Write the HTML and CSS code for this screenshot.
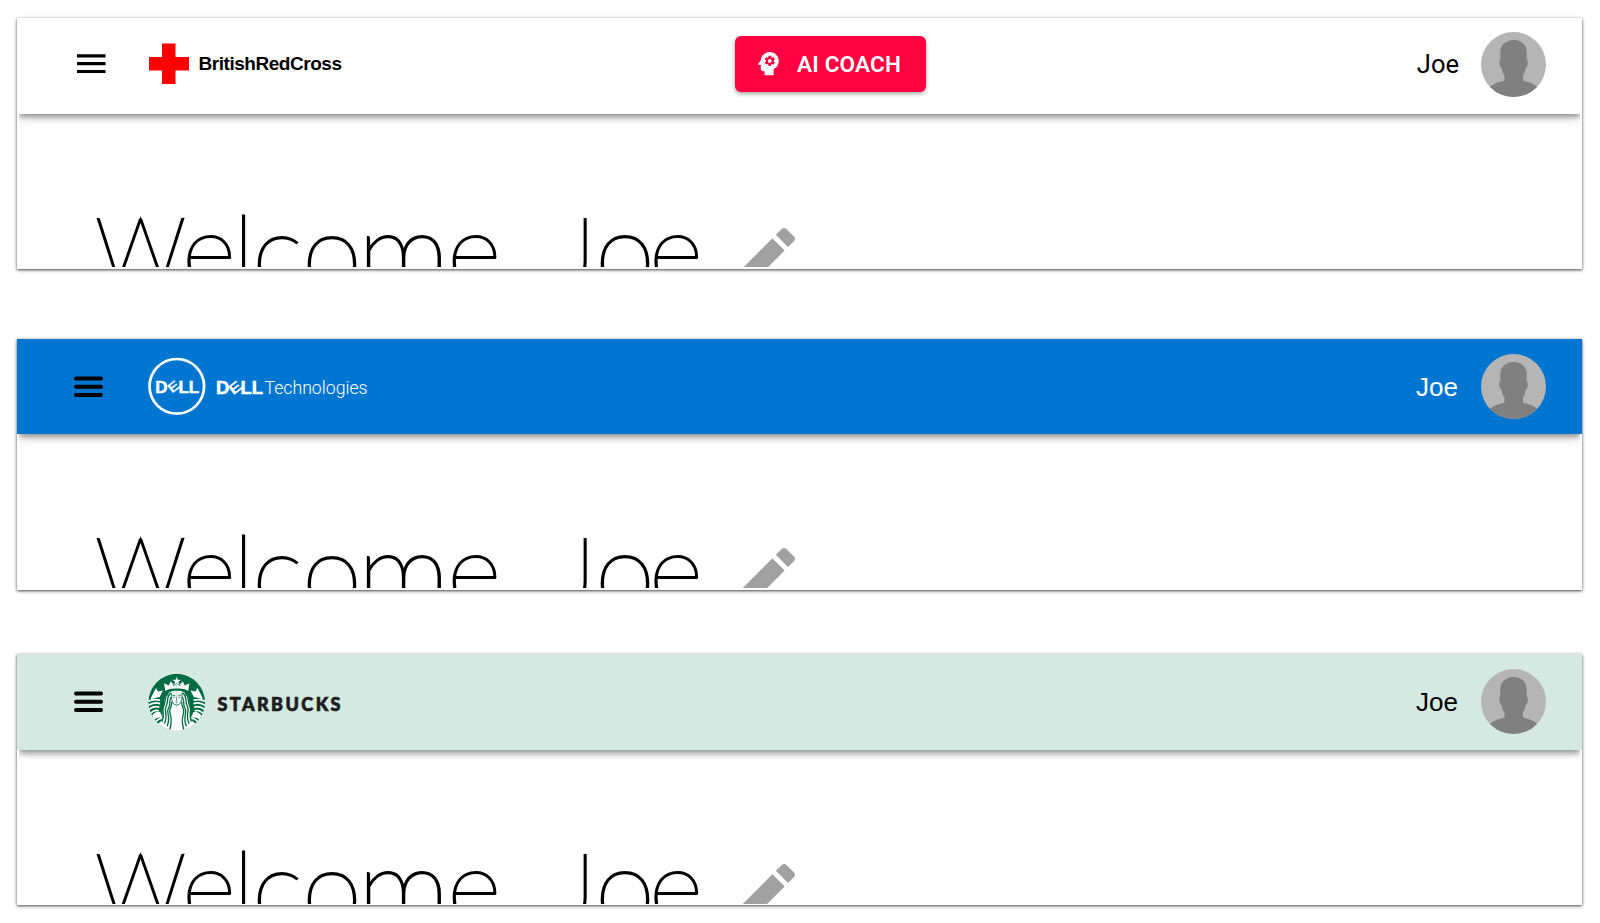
FILE: index.html
```html
<!DOCTYPE html>
<html lang="en">
<head>
<meta charset="utf-8">
<title>Welcome</title>
<link rel="stylesheet" href="styles.css">
</head>
<body>
<svg class="defs" width="0" height="0">
  <symbol id="avatar" viewBox="0 0 65 65">
    <clipPath id="round"><circle cx="32.5" cy="32.5" r="32.5"/></clipPath>
    <g clip-path="url(#round)">
      <rect width="65" height="65" fill="#b5b5b5"/>
      <path fill="#808080" d="M32.500 8C39 8 45.500 12 45.700 19.500L45.700 27.500C47.700 28 47 34 44.500 36.500C44 40 43 42 42 43.500V48.500C48 50.500 54 51.500 58 57V66H7V57C11 51.500 17 50.500 23.500 48.500V43.500C22 42 21.300 40 20.800 36.500C18 34 17.500 28 19.300 27.500L19.300 19.500C19.500 12 26 8 32.500 8Z"/>
    </g>
  </symbol>
  <symbol id="pencil" viewBox="0 0 24 24">
    <path d="M3 17.250V21h3.750L17.810 9.940l-3.750-3.750L3 17.250zM20.710 7.040c.39-.39.39-1.020 0-1.410l-2.340-2.340c-.39-.39-1.020-.39-1.410 0l-1.830 1.830 3.750 3.750 1.830-1.830z"/>
  </symbol>
</svg>
<main class="page">
  <section class="panel">
    <header class="bar bar-plain">
      <svg class="menu menu-square" viewBox="0 0 32 24"><path d="M3 3.900h28.500M3 11.700h28.500M3 19.500h28.500"/></svg>
      <svg class="logo" viewBox="0 0 230 64">
        <path fill="#f00" d="M14 11.500h13.500v13.500H41v13.500H27.500V52H14V38.500H1V25h13z"/>
        <text class="brc" x="50.500" y="38" textLength="143.500">BritishRedCross</text>
      </svg>
      <button class="coach">
        <svg viewBox="0 0 24 24"><path fill="#fff" fill-rule="evenodd" d="M13 3C9.250 3 6.200 5.940 6.020 9.640L4.100 12.200c-.25.33-.01.8.4.8H6v3c0 1.100.9 2 2 2h1v3h7v-4.680c2.360-1.120 4-3.530 4-6.320 0-3.870-3.130-7-7-7z"/><path fill="#ff0040" d="M16 10c0 .13-.01.26-.02.39l.83.66c.08.06.1.16.05.25l-.8 1.390c-.05.09-.16.12-.24.09l-.99-.4c-.21.16-.43.29-.67.39L14 13.830c-.01.1-.1.17-.2.17h-1.600c-.1 0-.18-.07-.2-.17l-.15-1.060c-.25-.1-.47-.23-.68-.39l-.99.4c-.09.03-.2 0-.25-.09l-.8-1.390c-.05-.08-.03-.19.05-.25l.84-.66c-.01-.13-.02-.26-.02-.39s.02-.27.04-.39l-.85-.66c-.08-.06-.1-.16-.05-.26l.8-1.380c.05-.09.15-.12.24-.09l1 .4c.2-.15.43-.29.67-.39L12 6.170c.02-.1.1-.17.2-.17h1.600c.1 0 .18.07.2.17l.15 1.060c.24.1.46.23.67.39l1-.4c.09-.03.2 0 .24.09l.8 1.380c.05.09.03.2-.05.26l-.85.66c.03.12.04.25.04.39z"/><circle cx="13" cy="10" r="1.430" fill="#fff"/></svg>
        <span>AI COACH</span>
      </button>
      <div class="user user-roboto"><span>Joe</span><svg class="avatar"><use href="#avatar"/></svg></div>
    </header>
    <div class="content">
      <svg class="welcome" viewBox="0 0 800 154">
        <text><tspan class="cap" x="78" y="168">W</tspan><tspan class="e" x="165" y="174">e</tspan><tspan x="217" y="167.500">l</tspan><tspan class="o" x="235 285" y="176.500">co</tspan><tspan class="m" x="340" y="181">m</tspan><tspan class="e" x="430.300" y="174">e</tspan></text>
        <text><tspan class="cap" x="541.500" y="168">J</tspan><tspan class="o" x="578" y="176">o</tspan><tspan class="e" x="632" y="173.500">e</tspan></text>
        <use href="#pencil" x="709.700" y="104.200" width="78" height="78"/>
      </svg>
    </div>
  </section>

  <section class="panel">
    <header class="bar bar-dell">
      <svg class="menu" viewBox="0 0 32 24"><path d="M2 3.500h25M2 11.800h25M2 20.100h25"/></svg>
      <svg class="logo" viewBox="0 0 230 64">
        <circle cx="28.800" cy="31.300" r="27.300" fill="none" stroke="#fff" stroke-width="2.700"/>
        <g class="dell dell-small"><text x="7.200" y="37.500">D</text><text class="tilt" transform="translate(25.300 31.500) rotate(-38) scale(1.250 1)" x="0" y="4.900">E</text><text x="30.500" y="37.500">L</text><text x="40.800" y="37.500">L</text></g>
        <g class="dell"><text x="68" y="39">D</text><text class="tilt" transform="translate(87 32.500) rotate(-38) scale(1.300 1)" x="0" y="5.200">E</text><text x="92.600" y="39">L</text><text x="103.800" y="39">L</text></g>
        <text class="tech" x="116.500" y="39" textLength="103" lengthAdjust="spacingAndGlyphs">Technologies</text>
      </svg>
      <div class="user"><span>Joe</span><svg class="avatar"><use href="#avatar"/></svg></div>
    </header>
    <div class="content">
      <svg class="welcome" viewBox="0 0 800 154">
        <text><tspan class="cap" x="78" y="168">W</tspan><tspan class="e" x="165" y="174">e</tspan><tspan x="217" y="167.500">l</tspan><tspan class="o" x="235 285" y="176.500">co</tspan><tspan class="m" x="340" y="181">m</tspan><tspan class="e" x="430.300" y="174">e</tspan></text>
        <text><tspan class="cap" x="541.500" y="168">J</tspan><tspan class="o" x="578" y="176">o</tspan><tspan class="e" x="632" y="173.500">e</tspan></text>
        <use href="#pencil" x="709.700" y="104.200" width="78" height="78"/>
      </svg>
    </div>
  </section>

  <section class="panel">
    <header class="bar bar-starbucks">
      <svg class="menu" viewBox="0 0 32 24"><path d="M2 3.500h25M2 11.800h25M2 20.100h25"/></svg>
      <svg class="logo" viewBox="0 0 230 64">
        <svg x="0" y="3.500" width="57.500" height="57.500" viewBox="0 0 172 172">
          <clipPath id="seal"><circle cx="86" cy="86" r="85"/></clipPath>
          <g clip-path="url(#seal)">
            <circle cx="86" cy="86" r="85" fill="#006c45"/>
            <g id="half">
              <path fill="#fff" d="M86 52C62 50 49 66 49 84C49 102 40 113 45 134L35 153L48 163L65 172H86Z"/>
              <path fill="#fff" d="M10 70L24 43L30 54L45 51L35 70Q25 71 8 78Z"/>
              <path fill="none" stroke="#fff" stroke-width="5" d="M0 84Q15 75 36 80M0 96Q17 84 36 90M2 108Q17 95 34 101M6 120Q20 106 32 112"/>
              <path fill="#fff" d="M12 126Q22 112 36 115L44 134Q28 128 18 139Z"/>
              <path fill="none" stroke="#fff" stroke-width="5" d="M22 148Q27 135 42 134M31 158Q34 147 43 143"/>
              <path fill="none" stroke="#006c45" stroke-width="4" d="M70 58C52 68 63 84 54 99C46 112 62 124 49 150M70 70C60 83 70 91 61 104C53 117 70 129 57 158M71 84C74 97 63 105 65 115C68 129 74 137 65 168M61 58C46 72 55 84 47 98C39 112 53 121 42 144"/>
              <path fill="#fff" d="M51 48L48 29L62 36L68 23L77 34L86 28V45Q67 43 51 52Z"/>
              <path fill="none" stroke="#006c45" stroke-width="3" d="M53 54Q68 46 86 48"/>
              <path fill="none" stroke="#006c45" stroke-width="2.500" d="M71 59Q68 82 78 92L86 95M73 67Q78 63 82 67M76 71H81"/>
              <path fill="#fff" d="M86 102Q75 109 77 121Q83 136 76 172H86Z"/>
            </g>
            <use href="#half" transform="matrix(-1 0 0 1 172 0)"/>
            <path fill="#fff" stroke="#006c45" stroke-width="2" d="M86 7L90 18H102L92 25L96 37L86 30L76 37L80 25L70 18H82Z"/>
            <path fill="none" stroke="#006c45" stroke-width="2" d="M86 70V80H83M82 86H90"/>
          </g>
        </svg>
        <text class="sbux" x="69.500" y="41" textLength="123">STARBUCKS</text>
      </svg>
      <div class="user"><span>Joe</span><svg class="avatar"><use href="#avatar"/></svg></div>
    </header>
    <div class="content">
      <svg class="welcome" viewBox="0 0 800 154">
        <text><tspan class="cap" x="78" y="168">W</tspan><tspan class="e" x="165" y="174">e</tspan><tspan x="217" y="167.500">l</tspan><tspan class="o" x="235 285" y="176.500">co</tspan><tspan class="m" x="340" y="181">m</tspan><tspan class="e" x="430.300" y="174">e</tspan></text>
        <text><tspan class="cap" x="541.500" y="168">J</tspan><tspan class="o" x="578" y="176">o</tspan><tspan class="e" x="632" y="173.500">e</tspan></text>
        <use href="#pencil" x="709.700" y="104.200" width="78" height="78"/>
      </svg>
    </div>
  </section>
</main>
</body>
</html>
```
FILE: styles.css
```css
* { box-sizing: border-box; }
body { margin: 0; background: #fff; font-family: "Liberation Sans", Arial, sans-serif; overflow: hidden; }
.defs { display: block; height: 0; }
.page { padding: 18px 18px 0 17px; display: grid; grid-template-rows: 251px 251px 251px; row-gap: 70px; }
.panel { background: #fff; box-shadow: 0 1px 4px rgba(0,0,0,.4), 0 1px 2px rgba(0,0,0,.45); }
.panel:last-child { margin-top: -6px; height: 251px; }
.bar { height: 95.5px; display: grid; grid-template-columns: 74px 230px 1fr auto; align-items: center; padding: 0 36px 0 57px; position: relative; }
.bar::after { content: ""; position: absolute; left: 2px; right: 2px; bottom: 0; height: 10px; box-shadow: 0 2px 6px rgba(0,0,0,.45), 0 5px 10px rgba(0,0,0,.12); z-index: 0; clip-path: inset(10px 0 -20px 0); }
.bar-plain { padding-bottom: 4px; }
.bar-dell { background: #0076d1; height: 95px; }
.bar-starbucks { background: #d4e9e1; height: 96px; padding-bottom: 1px; }
.menu { width: 32px; height: 24px; stroke: #000; stroke-width: 4; stroke-linecap: round; fill: none; }
.menu-square { stroke-width: 3.2; stroke-linecap: butt; }
.logo { width: 230px; height: 64px; overflow: visible; grid-column: 2; }
.brc { font-size: 19px; font-weight: 700; }
.dell { fill: #fff; stroke: #fff; stroke-width: .5; font-weight: 700; font-size: 18.500px; }
.dell-small { font-size: 17px; }
.dell .tilt { font-size: 14.500px; text-anchor: middle; stroke-width: 0; }
.dell-small .tilt { font-size: 13.500px; }
.tech { font-family: Roboto, sans-serif; font-weight: 300; font-size: 19px; fill: #fff; }
.sbux { font-family: Lato, sans-serif; font-weight: 900; font-size: 18px; fill: #1e1e1e; stroke: #1e1e1e; stroke-width: .7; }
.coach { grid-column: 3; width: 191px; height: 56px; margin: 0 0 0 357px; padding: 0 0 0 18px; display: flex; align-items: center; gap: 13px; border: 0; border-radius: 6px; background: #ff0040; color: #fff; font: 600 22.500px Roboto, sans-serif; letter-spacing: .2px; box-shadow: 0 2px 4px rgba(0,0,0,.35); }
.coach svg { width: 31px; height: 31px; }
.user { grid-column: 4; display: flex; align-items: center; gap: 23px; font-size: 26px; }
.user span { padding-top: 2px; }
.user-roboto { font-family: Roboto, sans-serif; font-size: 25.500px; gap: 22px; padding-top: 1px; }
.user-roboto span { padding: 0; }
.bar-dell .user { color: #fff; }
.avatar { width: 65px; height: 65px; }
.content { height: 153.500px; overflow: hidden; }
.bar-plain + .content { height: 153px; }
.welcome { display: block; width: 800px; height: 154px; overflow: hidden; }
.welcome text { font-family: Lato, sans-serif; font-weight: 100; font-size: 92px; stroke: #000; stroke-width: 2; }
.welcome .cap { font-size: 91px; }
.welcome .e { font-size: 104.500px; }
.welcome .o { font-size: 109px; }
.welcome .m { font-size: 118px; }
.welcome use { fill: #a1a1a1; }
```
